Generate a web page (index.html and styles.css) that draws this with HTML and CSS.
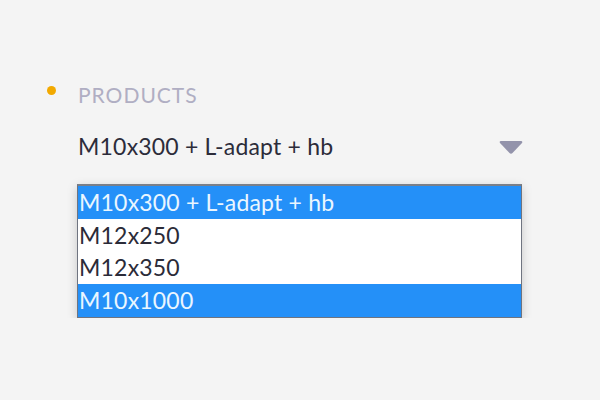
FILE: index.html
```html
<!DOCTYPE html>
<html>
<head>
<meta charset="utf-8">
<link rel="stylesheet" href="styles.css">
</head>
<body>
<div class="field">
  <div class="label-row">
    <span class="dot"></span>
    <span class="label">PRODUCTS</span>
  </div>
  <div class="select">
    <span class="value">M10x300 + L-adapt + hb</span>
    <svg class="caret" width="26" height="16" viewBox="0 0 26 16"><path d="M3 1 H23 Q25 1 24 3 L14.5 13 Q13 14.5 11.5 13 L2 3 Q1 1 3 1 Z" fill="#9393ab"/></svg>
  </div>
  <div class="listbox">
    <div class="opt sel">M10x300 + L-adapt + hb</div>
    <div class="opt">M12x250</div>
    <div class="opt">M12x350</div>
    <div class="opt sel last">M10x1000</div>
  </div>
</div>
</body>
</html>
```
FILE: styles.css
```css
html, body {
  margin: 0;
  padding: 0;
  background: #f4f4f4;
  font-family: Lato, "Open Sans", sans-serif;
}
.field {
  padding: 82px 0 0 47px;
  width: 475px;
}
.label-row {
  display: flex;
  align-items: center;
  gap: 22px;
  height: 24px;
}
.dot {
  width: 9px;
  height: 9px;
  border-radius: 50%;
  background: #f2a900;
  margin-top: -7px;
}
.label {
  font-size: 21px;
  color: #b0aec3;
  letter-spacing: 1px;
}
.select {
  display: flex;
  align-items: center;
  justify-content: space-between;
  margin: 27px 0 0 31px;
  height: 26px;
}
.value {
  font-size: 23px;
  color: #2c2c3a;
  letter-spacing: 0.2px;
}
.caret {
  margin-right: -2px;
  margin-top: 4px;
}
.listbox {
  margin: 25px 0 0 30px;
  width: 443px;
  border: 1px solid #6f7480;
  border-top: 2px solid #7a7f88;
  background: #fff;
  box-shadow: 0 3px 10px rgba(0,0,0,0.18);
}
.opt {
  height: 32.5px;
  line-height: 32px;
  font-size: 23px;
  color: #2b2b38;
  padding-left: 1px;
  letter-spacing: 0.2px;
}
.opt.sel {
  background: #2490f8;
  color: #eaf6ff;
}
.opt.last {
  height: 33px;
}
```
